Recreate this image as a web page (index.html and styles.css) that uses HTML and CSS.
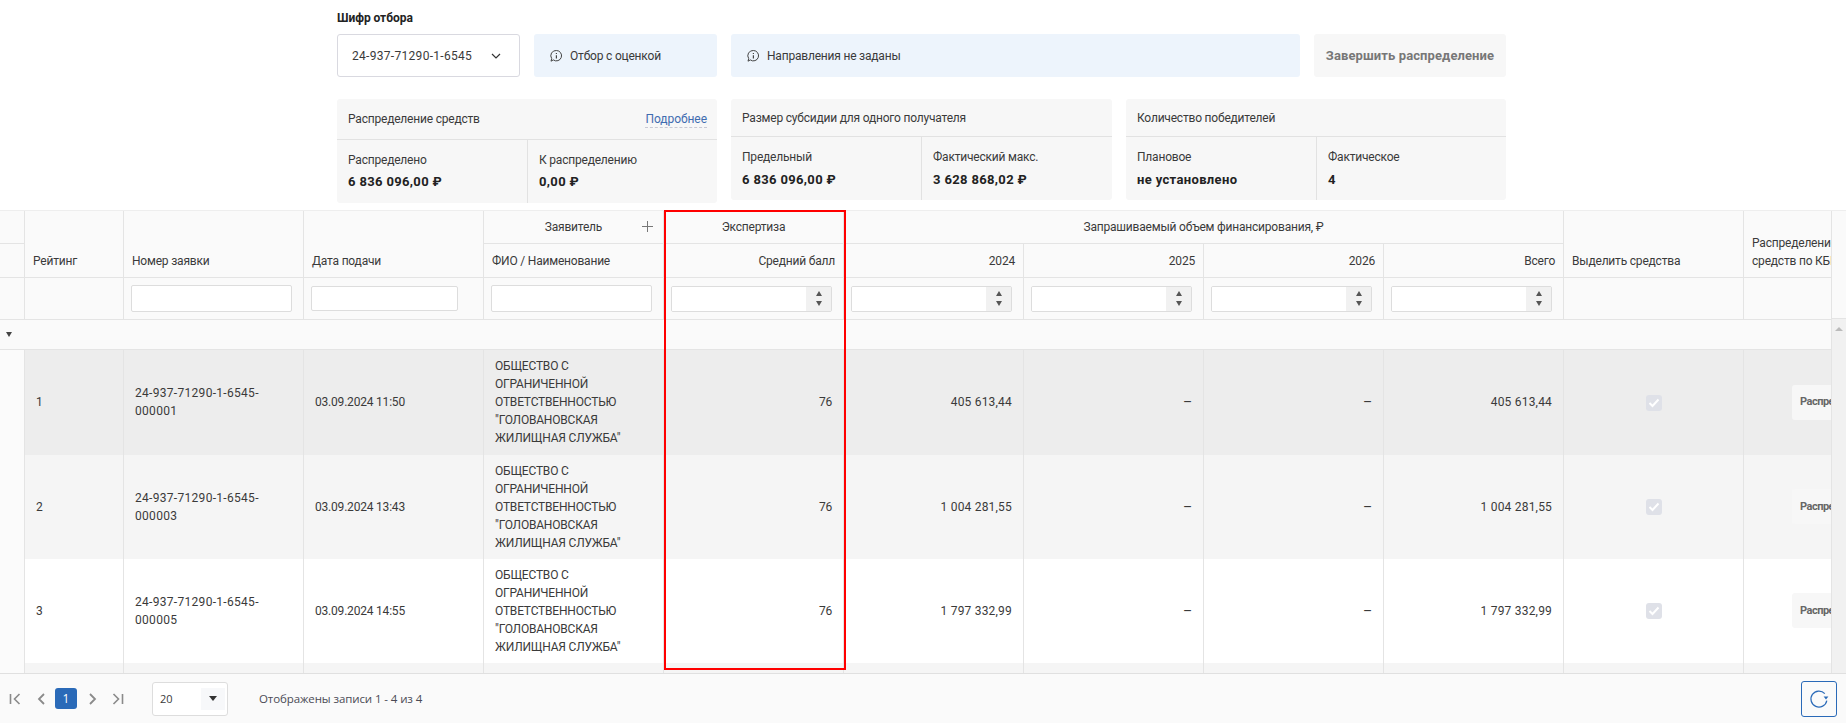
FILE: index.html
```html
<!DOCTYPE html>
<html lang="ru">
<head>
    <meta charset="UTF-8">
    <title>Распределение средств</title>
    <link rel="stylesheet" href="styles.css">
</head>
<body>
    <svg class="defs" width="0" height="0">
        <symbol id="info" viewBox="0 0 14 14">
            <path d="M7.4 1.5a5.2 5.2 0 1 1-3.1 9.4L2 12.2l.7-2.6A5.2 5.2 0 0 1 7.4 1.5z" fill="none" stroke="currentColor" stroke-width="1"/>
            <path d="M7.4 6.2v3.4M7.4 3.9v1.2" fill="none" stroke="currentColor" stroke-width="1.2"/>
        </symbol>
    </svg>

    <!-- Selection bar and summary cards -->
    <div class="top">
        <div class="top-label">Шифр отбора</div>
        <div class="top-row">
            <div class="select-box">
                <span class="digits">24-937-71290-1-6545</span>
                <svg width="10" height="6" viewBox="0 0 10 6"><path d="M1 1l4 4 4-4" fill="none" stroke="#333" stroke-width="1.2"/></svg>
            </div>
            <div class="note note-short"><svg class="info-icon"><use href="#info"/></svg>Отбор с оценкой</div>
            <div class="note note-wide"><svg class="info-icon"><use href="#info"/></svg>Направления не заданы</div>
            <button class="finish-btn" type="button">Завершить распределение</button>
        </div>
        <div class="cards">
            <div class="card">
                <div class="card-head card-head-tall"><span>Распределение средств</span><a class="more-link">Подробнее</a></div>
                <div class="card-body">
                    <div class="card-cell"><div>Распределено</div><b>6 836 096,00 ₽</b></div>
                    <div class="card-cell"><div>К распределению</div><b>0,00 ₽</b></div>
                </div>
            </div>
            <div class="card">
                <div class="card-head"><span>Размер субсидии для одного получателя</span></div>
                <div class="card-body">
                    <div class="card-cell"><div>Предельный</div><b>6 836 096,00 ₽</b></div>
                    <div class="card-cell"><div>Фактический макс.</div><b>3 628 868,02 ₽</b></div>
                </div>
            </div>
            <div class="card">
                <div class="card-head"><span>Количество победителей</span></div>
                <div class="card-body">
                    <div class="card-cell"><div>Плановое</div><b>не установлено</b></div>
                    <div class="card-cell"><div>Фактическое</div><b>4</b></div>
                </div>
            </div>
        </div>
    </div>

    <!-- Applications grid -->
    <div class="grid-wrap">
        <div class="grid-clip">
            <table class="grid">
                <colgroup>
                    <col class="col-first"><col class="col-rate">
                    <col class="col-std"><col class="col-std"><col class="col-std"><col class="col-std">
                    <col class="col-std"><col class="col-std"><col class="col-std"><col class="col-std">
                    <col class="col-std"><col class="col-std">
                </colgroup>
                <thead>
                    <tr class="head-top">
                        <th></th>
                        <th rowspan="2" class="bottom">Рейтинг</th>
                        <th rowspan="2" class="bottom">Номер заявки</th>
                        <th rowspan="2" class="bottom">Дата подачи</th>
                        <th class="center has-plus">Заявитель<span class="plus"></span></th>
                        <th class="center">Экспертиза</th>
                        <th class="center" colspan="4">Запрашиваемый объем финансирования, ₽</th>
                        <th rowspan="2" class="bottom">Выделить средства</th>
                        <th rowspan="2" class="bottom kbk">Распределение<br>средств по КБК</th>
                    </tr>
                    <tr class="head-sub">
                        <th></th>
                        <th>ФИО / Наименование</th>
                        <th class="right">Средний балл</th>
                        <th class="right">2024</th>
                        <th class="right">2025</th>
                        <th class="right">2026</th>
                        <th class="right">Всего</th>
                    </tr>
                    <tr class="head-filter">
                        <th></th>
                        <th></th>
                        <th><input class="filter" type="text"></th>
                        <th><input class="filter filter-date" type="text"></th>
                        <th><input class="filter" type="text"></th>
                        <th><div class="num"><input type="text"><span class="spin"><i class="up"></i><i class="down"></i></span></div></th>
                        <th><div class="num"><input type="text"><span class="spin"><i class="up"></i><i class="down"></i></span></div></th>
                        <th><div class="num"><input type="text"><span class="spin"><i class="up"></i><i class="down"></i></span></div></th>
                        <th><div class="num"><input type="text"><span class="spin"><i class="up"></i><i class="down"></i></span></div></th>
                        <th><div class="num"><input type="text"><span class="spin"><i class="up"></i><i class="down"></i></span></div></th>
                        <th></th>
                        <th></th>
                    </tr>
                </thead>
                <tbody>
                    <tr class="group-row"><td colspan="12"><span class="group-arrow"></span></td></tr>
                    <tr class="row row-hover">
                        <td class="first"></td><td>1</td><td class="digits">24-937-71290-1-6545-<br>000001</td><td>03.09.2024 11:50</td>
                        <td>ОБЩЕСТВО С ОГРАНИЧЕННОЙ ОТВЕТСТВЕННОСТЬЮ "ГОЛОВАНОВСКАЯ ЖИЛИЩНАЯ СЛУЖБА"</td>
                        <td class="right">76</td><td class="right sum">405 613,44</td><td class="right dash">–</td><td class="right dash">–</td><td class="right sum">405 613,44</td>
                        <td class="center"><span class="check"><svg width="12" height="10" viewBox="0 0 12 10"><path d="M1.5 5l3 3 6-6.5" fill="none" stroke="#fff" stroke-width="2"/></svg></span></td>
                        <td><button class="kbk-btn" type="button">Распределить</button></td>
                    </tr>
                    <tr class="row row-even">
                        <td class="first"></td><td>2</td><td class="digits">24-937-71290-1-6545-<br>000003</td><td>03.09.2024 13:43</td>
                        <td>ОБЩЕСТВО С ОГРАНИЧЕННОЙ ОТВЕТСТВЕННОСТЬЮ "ГОЛОВАНОВСКАЯ ЖИЛИЩНАЯ СЛУЖБА"</td>
                        <td class="right">76</td><td class="right sum">1 004 281,55</td><td class="right dash">–</td><td class="right dash">–</td><td class="right sum">1 004 281,55</td>
                        <td class="center"><span class="check"><svg width="12" height="10" viewBox="0 0 12 10"><path d="M1.5 5l3 3 6-6.5" fill="none" stroke="#fff" stroke-width="2"/></svg></span></td>
                        <td><button class="kbk-btn" type="button">Распределить</button></td>
                    </tr>
                    <tr class="row row-odd">
                        <td class="first"></td><td>3</td><td class="digits">24-937-71290-1-6545-<br>000005</td><td>03.09.2024 14:55</td>
                        <td>ОБЩЕСТВО С ОГРАНИЧЕННОЙ ОТВЕТСТВЕННОСТЬЮ "ГОЛОВАНОВСКАЯ ЖИЛИЩНАЯ СЛУЖБА"</td>
                        <td class="right">76</td><td class="right sum">1 797 332,99</td><td class="right dash">–</td><td class="right dash">–</td><td class="right sum">1 797 332,99</td>
                        <td class="center"><span class="check"><svg width="12" height="10" viewBox="0 0 12 10"><path d="M1.5 5l3 3 6-6.5" fill="none" stroke="#fff" stroke-width="2"/></svg></span></td>
                        <td><button class="kbk-btn" type="button">Распределить</button></td>
                    </tr>
                    <tr class="row row-even">
                        <td class="first"></td><td>4</td><td class="digits">24-937-71290-1-6545-<br>000007</td><td>03.09.2024 15:20</td>
                        <td>ОБЩЕСТВО С ОГРАНИЧЕННОЙ ОТВЕТСТВЕННОСТЬЮ "ГОЛОВАНОВСКАЯ ЖИЛИЩНАЯ СЛУЖБА"</td>
                        <td class="right">76</td><td class="right sum">2 628 868,02</td><td class="right dash">–</td><td class="right dash">–</td><td class="right sum">2 628 868,02</td>
                        <td class="center"><span class="check"><svg width="12" height="10" viewBox="0 0 12 10"><path d="M1.5 5l3 3 6-6.5" fill="none" stroke="#fff" stroke-width="2"/></svg></span></td>
                        <td><button class="kbk-btn" type="button">Распределить</button></td>
                    </tr>
                </tbody>
            </table>
        </div>
        <div class="side">
            <div class="side-head"></div>
            <div class="scrollbar"><span class="scroll-up"></span></div>
        </div>
        <div class="highlight"></div>
    </div>

    <!-- Pager -->
    <div class="pager">
        <svg class="pager-icon first-page" width="12" height="14" viewBox="0 0 12 14"><path d="M1.5 2v10M10.5 2l-5 5 5 5" fill="none" stroke="#8a8a8a" stroke-width="1.6"/></svg>
        <svg class="pager-icon prev-page" width="8" height="14" viewBox="0 0 8 14"><path d="M7 2L2 7l5 5" fill="none" stroke="#8a8a8a" stroke-width="1.8"/></svg>
        <span class="page-num">1</span>
        <svg class="pager-icon next-page" width="8" height="14" viewBox="0 0 8 14"><path d="M1 2l5 5-5 5" fill="none" stroke="#8a8a8a" stroke-width="1.8"/></svg>
        <svg class="pager-icon last-page" width="12" height="14" viewBox="0 0 12 14"><path d="M10.5 2v10M1.5 2l5 5-5 5" fill="none" stroke="#8a8a8a" stroke-width="1.6"/></svg>
        <div class="page-size"><span>20</span><span class="page-size-arrow"><i></i></span></div>
        <span class="page-info">Отображены записи 1 - 4 из 4</span>
        <button class="refresh-btn" type="button">
            <svg width="22" height="22" viewBox="0 0 22 22"><path d="M16.8 5.6A8 8 0 1 0 18.8 12.6" fill="none" stroke="#2a6ab8" stroke-width="1.2"/><path d="M15.6 8.6h4.8l-2.4 2.8z" fill="#2a6ab8"/></svg>
        </button>
    </div>
</body>
</html>
```
FILE: styles.css
```css
* {
    box-sizing: border-box;
}

html, body {
    margin: 0;
    padding: 0;
}

body {
    width: 1846px;
    height: 723px;
    overflow: hidden;
    background: #fff;
    color: #3a3a3a;
    font-family: Roboto, "Liberation Sans", sans-serif;
    font-size: 12px;
    line-height: 18px;
    letter-spacing: -0.2px;
    display: flex;
    flex-direction: column;
}

.defs {
    position: absolute;
}

.digits {
    letter-spacing: 0.3px;
}

.sum {
    letter-spacing: 0.2px;
}

/* top block */
.top {
    height: 210px;
    padding: 9px 340px 0 337px;
}

.top-label {
    font-weight: 700;
    height: 25px;
    color: #222;
    letter-spacing: -0.05px;
}

.top-row {
    display: flex;
    gap: 14px;
    height: 43px;
}

.select-box {
    width: 183px;
    border: 1px solid #d9d9e0;
    border-radius: 3px;
    display: flex;
    align-items: center;
    justify-content: space-between;
    padding: 0 18px 0 14px;
}

.note {
    background: #edf4fc;
    border-radius: 3px;
    display: flex;
    align-items: center;
    padding-left: 15px;
}

.note-short {
    width: 183px;
}

.note-wide {
    flex: 1;
}

.info-icon {
    width: 14px;
    height: 14px;
    margin-right: 7px;
    color: #444;
}

.finish-btn {
    width: 192px;
    background: #f7f7f7;
    border: none;
    border-radius: 3px;
    color: #777;
    font: inherit;
    font-size: 13px;
    font-weight: 700;
    letter-spacing: 0.1px;
    padding: 0;
}

.cards {
    display: flex;
    align-items: flex-start;
    gap: 14px;
    margin-top: 22px;
}

.card {
    width: 380px;
    background: #f7f7f7;
    border-radius: 3px;
}

.card:nth-child(2) {
    width: 381px;
}

.card-head {
    height: 38px;
    padding: 0 10px 0 11px;
    border-bottom: 1px solid #e2e2e2;
    display: flex;
    align-items: center;
    justify-content: space-between;
}

.card-head-tall {
    height: 41px;
}

.more-link {
    color: #3f6cb0;
    border-bottom: 1px dashed #c9c9d4;
    line-height: 16px;
    letter-spacing: -0.05px;
}

.card-body {
    display: flex;
}

.card-cell {
    width: 190px;
    height: 63px;
    padding: 11px 11px 0;
}

.card-head-tall + .card-body .card-cell b {
    margin-top: 4px;
}

.card-cell + .card-cell {
    border-left: 1px solid #e2e2e2;
}

.card-cell b {
    display: block;
    margin-top: 5px;
    color: #222;
    font-size: 13px;
    letter-spacing: 0.35px;
}

/* grid */
.grid-wrap {
    position: relative;
    height: 463px;
    display: flex;
    border-top: 1px solid #eee;
}

.grid-clip {
    width: 1831px;
    overflow: hidden;
}

.grid {
    table-layout: fixed;
    width: 1924px;
    border-collapse: separate;
    border-spacing: 0;
}

.col-first {
    width: 25px;
}

.col-rate {
    width: 99px;
}

.col-std {
    width: 180px;
}

.grid th {
    background: #fafafa;
    font-weight: 400;
    text-align: left;
    padding: 0 8px;
    border-right: 1px solid #e4e4e4;
    border-bottom: 1px solid #e4e4e4;
}

.grid th.center {
    text-align: center;
}

.grid th.right {
    text-align: right;
}

.grid th.bottom {
    vertical-align: bottom;
    padding-bottom: 7px;
}

.head-top th {
    height: 33px;
}

.head-sub th {
    height: 34px;
}

.head-filter th {
    height: 42px;
    padding: 0 11px 0 7px;
}

.has-plus {
    position: relative;
}

.plus {
    position: absolute;
    right: 10px;
    top: 10px;
    width: 11px;
    height: 11px;
    background:
        linear-gradient(#777, #777) center / 11px 1px no-repeat,
        linear-gradient(#777, #777) center / 1px 11px no-repeat;
}

.filter {
    display: block;
    width: 161px;
    height: 27px;
    border: 1px solid #ddd;
    border-radius: 2px;
    background: #fff;
}

.filter-date {
    width: 147px;
    height: 25px;
}

.num {
    display: flex;
    width: 161px;
    height: 26px;
    border: 1px solid #ddd;
    border-radius: 2px;
    background: #fff;
    overflow: hidden;
}

.num input {
    flex: 1;
    min-width: 0;
    border: none;
    padding: 0;
}

.spin {
    width: 25px;
    background: #f1f1f1;
    display: flex;
    flex-direction: column;
    align-items: center;
    justify-content: center;
    gap: 5px;
}

.up, .down {
    width: 0;
    height: 0;
    border-left: 3.5px solid transparent;
    border-right: 3.5px solid transparent;
}

.up {
    border-bottom: 5px solid #555;
}

.down {
    border-top: 5px solid #555;
}

.group-row td {
    height: 30px;
    background: #fafafa;
    border-bottom: 1px solid #e4e4e4;
    padding: 0 0 0 6px;
}

.group-arrow {
    display: block;
    width: 0;
    height: 0;
    border-left: 3.5px solid transparent;
    border-right: 3.5px solid transparent;
    border-top: 5px solid #444;
}

.row td {
    padding: 0 11px 1px;
    border-right: 1px solid #e4e4e4;
    vertical-align: middle;
    height: 104px;
}

.row td.right {
    text-align: right;
}

.row td.center {
    text-align: center;
}

.row td.first {
    background: #fbfbfb;
    padding: 0;
}

.row td.dash {
    font-size: 14px;
}

.row-hover td {
    background: #ededed;
    height: 105px;
}

.row-even td {
    background: #f5f5f5;
}

.row-odd td {
    background: #fff;
}

.check {
    display: inline-flex;
    align-items: center;
    justify-content: center;
    width: 16px;
    height: 16px;
    border-radius: 3px;
    background: #dfe1e8;
    vertical-align: middle;
}

.kbk-btn {
    margin-left: 37px;
    height: 35px;
    padding: 0 8px;
    border: none;
    border-radius: 3px;
    background: #f7f7f7;
    color: #666;
    font: inherit;
    font-size: 11px;
    font-weight: 700;
    letter-spacing: -0.5px;
}

.side {
    width: 15px;
    display: flex;
    flex-direction: column;
    border-left: 1px solid #e4e4e4;
}

.side-head {
    height: 108px;
    background: #fafafa;
    border-bottom: 1px solid #e4e4e4;
}

.scrollbar {
    flex: 1;
    background: #f1f1f1;
    padding: 8px 0 0 3px;
}

.scroll-up {
    display: block;
    width: 0;
    height: 0;
    border-left: 4px solid transparent;
    border-right: 4px solid transparent;
    border-bottom: 4px solid #bbb;
}

/* red frame drawn over the grid */
.highlight {
    position: absolute;
    left: 664px;
    top: -1px;
    width: 182px;
    height: 460px;
    border: 2px solid #f00;
    pointer-events: none;
}

/* pager */
.pager {
    height: 50px;
    background: #fafafa;
    border-top: 1px solid #e0e0e0;
    display: flex;
    align-items: center;
    padding: 0 9px;
    font-family: "Open Sans", sans-serif;
    letter-spacing: 0;
}

.first-page {
    margin-right: 16px;
}

.prev-page {
    margin-right: 10px;
}

.page-num {
    width: 22px;
    height: 21px;
    background: #2a6ab8;
    border-radius: 3px;
    color: #fff;
    text-align: center;
    line-height: 21px;
    margin-right: 12px;
}

.next-page {
    margin-right: 15px;
}

.page-size {
    width: 76px;
    height: 34px;
    margin-left: 28px;
    border: 1px solid #ddd;
    border-radius: 3px;
    background: #fff;
    display: flex;
    align-items: center;
    justify-content: space-between;
    padding: 0 2px 0 7px;
    font-size: 11px;
}

.page-size-arrow {
    width: 24px;
    height: 22px;
    background: #f7f8fa;
    display: flex;
    align-items: center;
    justify-content: center;
}

.page-size-arrow i {
    width: 0;
    height: 0;
    border-left: 4px solid transparent;
    border-right: 4px solid transparent;
    border-top: 5px solid #333;
}

.page-info {
    margin-left: 31px;
    color: #4a4a55;
    font-size: 11.5px;
    letter-spacing: -0.1px;
}

.refresh-btn {
    width: 36px;
    height: 36px;
    margin-left: auto;
    border: 1px solid #2a6ab8;
    border-radius: 3px;
    background: transparent;
    padding: 0;
    display: flex;
    align-items: center;
    justify-content: center;
}
```
